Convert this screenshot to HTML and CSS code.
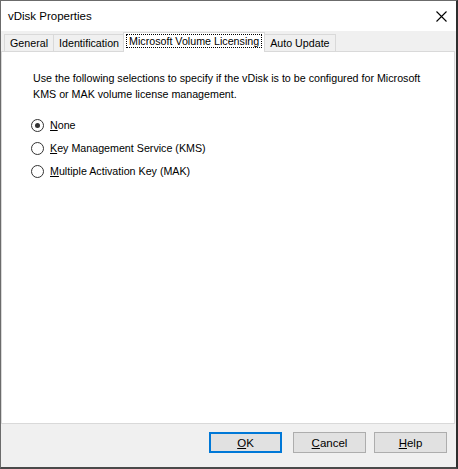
FILE: index.html
```html
<!DOCTYPE html>
<html lang="en">
<head>
    <meta charset="UTF-8">
    <title>vDisk Properties</title>
    <link rel="stylesheet" href="styles.css">
</head>
<body>

    <div class="window">

        <div class="title-bar">
            <span class="title-text">vDisk Properties</span>
            <svg class="close-icon" width="11" height="11" viewBox="0 0 11 11">
                <path d="M0.5 0.5 L10.5 10.5 M10.5 0.5 L0.5 10.5" stroke="#000" stroke-width="1.1" fill="none"/>
            </svg>
        </div>

        <div class="client">

            <div class="tab-row">
                <div class="tab">General</div>
                <div class="tab">Identification</div>
                <div class="tab tab-active"><span class="focus-box">Microsoft Volume Licensing</span></div>
                <div class="tab">Auto Update</div>
            </div>

            <div class="tab-panel">
                <p class="intro">
                    Use the following selections to specify if the vDisk is to be configured for Microsoft
                    <br>
                    KMS or MAK volume license management.
                </p>

                <div class="radio-list">
                    <label class="radio-row">
                        <span class="radio radio-checked"></span>
                        <span><u>N</u>one</span>
                    </label>
                    <label class="radio-row">
                        <span class="radio"></span>
                        <span><u>K</u>ey Management Service (KMS)</span>
                    </label>
                    <label class="radio-row">
                        <span class="radio"></span>
                        <span><u>M</u>ultiple Activation Key (MAK)</span>
                    </label>
                </div>
            </div>

            <div class="button-row">
                <button class="btn btn-default"><u>O</u>K</button>
                <button class="btn btn-cancel"><u>C</u>ancel</button>
                <button class="btn btn-help"><u>H</u>elp</button>
            </div>

        </div>

    </div>

</body>
</html>
```

FILE: styles.css
```css
body {
    margin: 0;
    background-color: #ffffff;
    font-family: "Liberation Sans", Arial, sans-serif;
    font-size: 10.7px;
    color: #000000;
}

.window {
    width: 455px;
    height: 466px;
    border: 1px solid #6b6b6b;
    border-right: 2px solid #2e2e2e;
    border-bottom: 2px solid #4a4a4a;
    display: flex;
    flex-direction: column;
    background-color: #f0f0f0;
}

.title-bar {
    height: 30px;
    background-color: #ffffff;
    display: flex;
    align-items: center;
    justify-content: space-between;
    padding: 0 9px 0 7px;
}

.title-text {
    font-size: 11.5px;
}

.close-icon {
    display: block;
}

.client {
    flex: 1;
    display: flex;
    flex-direction: column;
}

.tab-row {
    display: flex;
    align-items: flex-end;
    height: 20px;
    padding-left: 3px;
}

.tab {
    height: 16px;
    line-height: 16px;
    padding: 0 5px;
    border: 1px solid #d9d9d9;
    border-bottom: none;
    margin-right: -1px;
    background-color: #f0f0f0;
}

.tab-active {
    height: 19px;
    line-height: 17px;
    background-color: #ffffff;
    padding: 0 2px;
    margin-left: -1px;
    margin-right: -1px;
    position: relative;
    z-index: 1;
    margin-bottom: -1px;
}

.focus-box {
    border: 1px dotted #000000;
    padding: 0 2px;
}

.tab-panel {
    flex: 1;
    background-color: #ffffff;
    border: 1px solid #d9d9d9;
    margin: 0 1px 0 0;
    padding: 18px 0 0 29px;
}

.intro {
    margin: 0 0 0 2px;
    line-height: 16px;
}

.radio-list {
    margin-top: 17px;
    display: flex;
    flex-direction: column;
    gap: 10px;
}

.radio-row {
    display: flex;
    align-items: center;
    gap: 6px;
    height: 13px;
    line-height: 13px;
}

.radio {
    width: 11px;
    height: 11px;
    border: 1px solid #333333;
    border-radius: 50%;
    background-color: #ffffff;
    position: relative;
}

.radio-checked::after {
    content: "";
    position: absolute;
    left: 3px;
    top: 3px;
    width: 5px;
    height: 5px;
    border-radius: 50%;
    background-color: #333333;
}

.button-row {
    height: 43px;
    display: flex;
    justify-content: flex-end;
    align-items: flex-start;
    padding: 8px 9px 0 0;
    box-sizing: border-box;
}

.btn {
    width: 73px;
    height: 21px;
    background-color: #e1e1e1;
    border: 1px solid #adadad;
    font-family: "Liberation Sans", Arial, sans-serif;
    font-size: 11.5px;
    padding: 0;
    margin: 0;
}

.btn-default {
    border: 2px solid #0078d7;
}

.btn-cancel {
    margin-left: 11px;
}

.btn-help {
    margin-left: 8px;
}
```
